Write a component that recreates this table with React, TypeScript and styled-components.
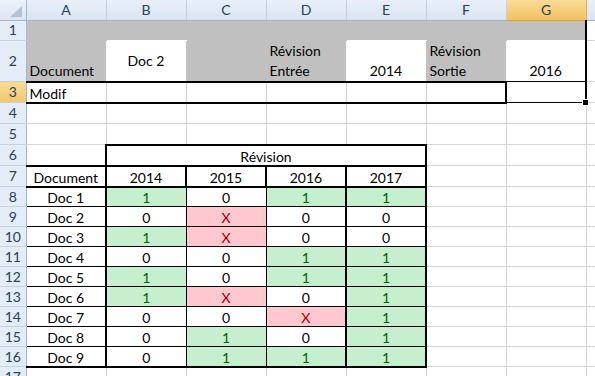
import React from 'react'
import styled, { createGlobalStyle } from 'styled-components'

type Edge = 'grid' | 'thin' | 'thick' | 'head' | 'gray' | 'white' | 'green' | 'red'
type Fill = 'gray' | 'white' | 'green' | 'red'

interface CellSpec {
    text?: string,
    fill?: Fill,
    align?: 'left' | 'center',
    valign?: 'bottom' | 'middle',
    tone?: 'ok' | 'ko',
    span?: number
}

const GlobalStyle = createGlobalStyle`
    html, body {
        margin: 0;
        padding: 0;
        background: #fff;
    }
    body {
        font-family: Lato, "Open Sans", sans-serif;
    }
`

const fillColor: Record<Fill, string> = {
    gray: '#c0c0c0',
    white: '#ffffff',
    green: '#c6efce',
    red: '#ffc7ce'
}

const edgeCss = (e: Edge) => {
    switch (e) {
        case 'thick': return '2px solid #000'
        case 'thin': return '1px solid #000'
        case 'head': return '1px solid #9eb6ce'
        case 'grid': return '1px solid #d4d4d4'
        default: return `1px solid ${fillColor[e]}`
    }
}

const COLS = ['A', 'B', 'C', 'D', 'E', 'F', 'G', 'H']
const ROWS = Array.from({ length: 18 }, (_, i) => i + 1)
const ACTIVE_ROW = 3
const ACTIVE_COL = 6

const docs: [string, string[]][] = [
    ['Doc 1', ['1', '0', '1', '1']],
    ['Doc 2', ['0', 'X', '0', '0']],
    ['Doc 3', ['1', 'X', '0', '0']],
    ['Doc 4', ['0', '0', '1', '1']],
    ['Doc 5', ['1', '0', '1', '1']],
    ['Doc 6', ['1', 'X', '0', '1']],
    ['Doc 7', ['0', '0', 'X', '1']],
    ['Doc 8', ['0', '1', '0', '1']],
    ['Doc 9', ['0', '1', '1', '1']]
]

const cells: Record<string, CellSpec> = {}
const put = (r: number, c: number, spec: CellSpec) => { cells[`${r}:${c}`] = spec }

for (let c = 0; c <= 6; c++) put(1, c, { fill: 'gray' })
put(2, 0, { text: 'Document', fill: 'gray' })
put(2, 1, { text: 'Doc 2', fill: 'white', align: 'center', valign: 'middle' })
put(2, 2, { fill: 'gray' })
put(2, 3, { text: 'Révision\nEntrée', fill: 'gray' })
put(2, 4, { text: '2014', fill: 'white', align: 'center' })
put(2, 5, { text: 'Révision\nSortie', fill: 'gray' })
put(2, 6, { text: '2016', fill: 'white', align: 'center' })
put(3, 0, { text: 'Modif' })
put(6, 1, { text: 'Révision', align: 'center', span: 4 })
put(7, 0, { text: 'Document', align: 'center' })
;['2014', '2015', '2016', '2017'].forEach((y, i) => put(7, i + 1, { text: y, align: 'center' }))
docs.forEach(([name, vals], i) => {
    const r = 8 + i
    put(r, 0, { text: name, align: 'center' })
    vals.forEach((v, j) => put(r, j + 1, {
        text: v,
        align: 'center',
        fill: v === '1' ? 'green' : v === 'X' ? 'red' : undefined,
        tone: v === '1' ? 'ok' : v === 'X' ? 'ko' : undefined
    }))
})

const covered = (r: number, c: number) => r === 6 && c >= 2 && c <= 4
const fillAt = (r: number, c: number): Fill | undefined => {
    if (covered(r, c)) return undefined
    return cells[`${r}:${c}`]?.fill
}

// line on top of row r, column c
const hEdge = (r: number, c: number): Edge => {
    if (r === 1) return 'head'
    if ((r === 3 || r === 4) && c <= 5) return 'thick'
    if ((r === 3 || r === 4) && c === 6) return 'thin'
    if (r === 6 && c >= 1 && c <= 4) return 'thick'
    if ((r === 7 || r === 8 || r === 17) && c <= 4) return 'thick'
    if (r >= 9 && r <= 16 && c <= 4) return 'thin'
    return fillAt(r, c) ?? fillAt(r - 1, c) ?? 'grid'
}

// line on the left of column c, row r
const vEdge = (r: number, c: number): Edge => {
    if (c === 0) return 'head'
    if ((r === 1 || r === 2) && c === 7) return 'thick'
    if (r === 3 && (c === 6 || c === 7)) return 'thick'
    if (r === 6 && (c === 1 || c === 5)) return 'thick'
    if (r === 7 && c >= 1 && c <= 5) return 'thick'
    if (r >= 8 && r <= 16) {
        if (c === 1 || c === 4 || c === 5) return 'thick'
        if (c === 2 || c === 3) return 'thin'
    }
    return fillAt(r, c) ?? fillAt(r, c - 1) ?? 'grid'
}

const rowHeight = (r: number) => (r === 2 ? 41 : r >= 3 && r <= 7 ? 21 : 20)

const Sheet = styled.div`
    width: 595px;
    height: 376px;
    overflow: hidden;
    background: #fff;
`

const Grid = styled.table`
    border-collapse: collapse;
    table-layout: fixed;
    width: 666px;
    font-family: Lato, "Open Sans", sans-serif;
    font-size: 14px;
    color: #000;
`

const Head = styled.th`
    padding: 0;
    font-weight: normal;
    font-size: 14px;
    color: #27415f;
    text-align: center;
    vertical-align: middle;
    line-height: 16px;
`

const Corner = styled(Head)`
    background: linear-gradient(#eef3fa, #dbe5f1);
    border-right: ${edgeCss('head')};
    border-bottom: ${edgeCss('head')};
    position: relative;
    & svg {
        position: absolute;
        left: 0;
        top: 0;
    }
`

const ColHead = styled(Head)<{ $selected?: boolean }>`
    background: ${p => p.$selected
        ? 'linear-gradient(#f9dc97, #f1c15f)'
        : 'linear-gradient(#e8eff8, #d9e4f1)'};
    border-left: 1px solid ${p => p.$selected ? '#e9b14e' : '#c3d1e2'};
    border-right: 1px solid ${p => p.$selected ? '#e9b14e' : '#c3d1e2'};
    border-bottom: ${p => p.$selected ? '1px solid #e9a23c' : edgeCss('head')};
`

const RowHead = styled(Head)<{ $selected?: boolean, $first?: boolean }>`
    background: ${p => p.$selected ? 'linear-gradient(#f9dc97, #f3c86c)' : '#e4ecf7'};
    border-right: ${edgeCss('head')};
    border-top: ${p => p.$first ? edgeCss('head') : '1px solid #c3d1e2'};
    border-bottom: 1px solid #c3d1e2;
`

const Row = styled.tr<{ $h: number }>`
    height: ${p => p.$h}px;
`

const Cell = styled.td<{
    $fill?: Fill,
    $align?: 'left' | 'center',
    $valign?: 'bottom' | 'middle',
    $tone?: 'ok' | 'ko',
    $wrap?: boolean,
    $t: Edge, $r: Edge, $b: Edge, $l: Edge
}>`
    position: relative;
    padding: 0 3px;
    overflow: visible;
    white-space: pre-line;
    line-height: ${p => p.$wrap ? 20 : 17}px;
    background: ${p => p.$fill ? fillColor[p.$fill] : 'transparent'};
    text-align: ${p => p.$align ?? 'left'};
    vertical-align: ${p => p.$valign ?? 'bottom'};
    color: ${p => p.$tone === 'ok' ? '#006100' : p.$tone === 'ko' ? '#9c0006' : '#000'};
    border-top: ${p => edgeCss(p.$t)};
    border-right: ${p => edgeCss(p.$r)};
    border-bottom: ${p => edgeCss(p.$b)};
    border-left: ${p => edgeCss(p.$l)};
`

const FillHandle = styled.span`
    position: absolute;
    right: -4px;
    bottom: -4px;
    width: 5px;
    height: 5px;
    background: #000;
    border: 1px solid #fff;
    z-index: 2;
`

const CornerMark = () => (
    <svg width="26" height="20" viewBox="0 0 26 20">
        <polygon points="10,17 22,17 22,6" fill="#b5c2d3" />
    </svg>
)

export default function App() {
    return (
        <Sheet>
            <GlobalStyle />
            <Grid>
                <colgroup>
                    <col style={{ width: 26 }} />
                    {COLS.map(c => <col key={c} style={{ width: 80 }} />)}
                </colgroup>
                <thead>
                    <Row $h={20}>
                        <Corner><CornerMark /></Corner>
                        {COLS.map((c, i) => (
                            <ColHead key={c} $selected={i === ACTIVE_COL}>{c}</ColHead>
                        ))}
                    </Row>
                </thead>
                <tbody>
                    {ROWS.map(r => (
                        <Row key={r} $h={rowHeight(r)}>
                            <RowHead $selected={r === ACTIVE_ROW} $first={r === 1}>{r}</RowHead>
                            {COLS.map((_, c) => {
                                if (covered(r, c)) return null
                                const spec = cells[`${r}:${c}`] ?? {}
                                const span = spec.span ?? 1
                                const active = r === ACTIVE_ROW && c === ACTIVE_COL
                                return (
                                    <Cell
                                        key={c}
                                        colSpan={span}
                                        $fill={spec.fill}
                                        $align={spec.align}
                                        $valign={spec.valign}
                                        $tone={spec.tone}
                                        $wrap={r === 2}
                                        $t={hEdge(r, c)}
                                        $b={hEdge(r + 1, c)}
                                        $l={vEdge(r, c)}
                                        $r={vEdge(r, c + span)}
                                    >
                                        {spec.text}
                                        {active && <FillHandle />}
                                    </Cell>
                                )
                            })}
                        </Row>
                    ))}
                </tbody>
            </Grid>
        </Sheet>
    )
}
